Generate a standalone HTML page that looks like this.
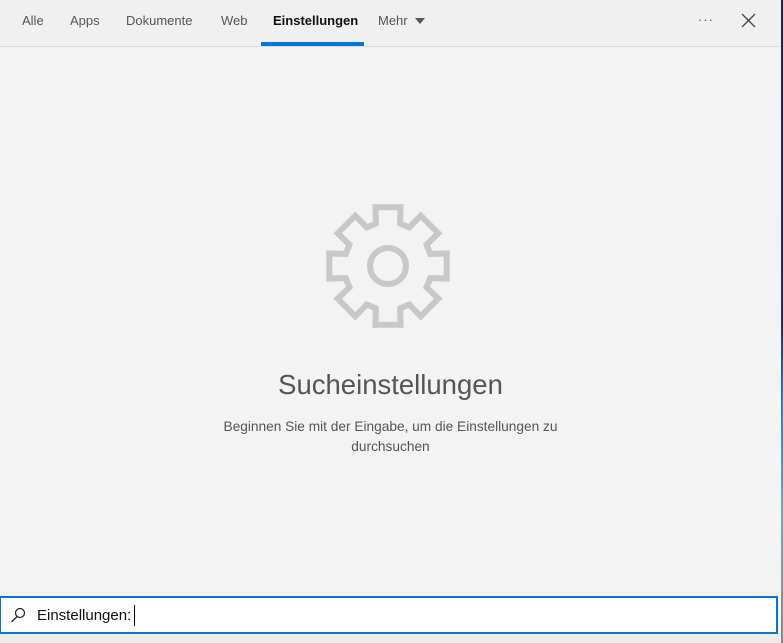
<!DOCTYPE html>
<html><head><meta charset="utf-8"><style>
html,body{margin:0;padding:0;width:783px;height:643px;overflow:hidden;background:#f3f3f3;font-family:"Liberation Sans",sans-serif}
.top{position:absolute;left:0;top:0;width:781px;height:46px;background:#f0f0f0;border-bottom:1px solid #dcdcdc}
.tab{position:absolute;top:13px;font-size:13px;color:#555}
.sel{color:#111;font-weight:bold}
.ul{position:absolute;left:261px;top:42px;width:103px;height:4px;background:#0078d4}
.side{position:absolute;left:781px;top:0;width:2px;height:643px;background:linear-gradient(#1c2740 0,#23304f 50%,#2a78b8 62%,#7aa 80%,#888 100%)}
.title{position:absolute;left:0;width:781px;top:369px;text-align:center;font-size:27.5px;color:#555}
.sub{position:absolute;left:200px;width:381px;top:417px;text-align:center;font-size:13.7px;line-height:20px;color:#555}
.box{position:absolute;left:0;top:596px;width:775px;height:34px;background:#fff;border:2px solid #0078d4;border-left-width:1px}
.box span{position:absolute;left:36px;top:9px;font-size:15px;color:#111}
.caret{position:absolute;left:133px;top:7px;width:1px;height:21px;background:#000}
.bot{position:absolute;left:0;top:634px;width:781px;height:9px;background:#ececec}
</style></head><body>
<div class="top">
<div class="tab" style="left:22px">Alle</div>
<div class="tab" style="left:70px">Apps</div>
<div class="tab" style="left:126px">Dokumente</div>
<div class="tab" style="left:221px">Web</div>
<div class="tab sel" style="left:273px">Einstellungen</div>
<div class="tab" style="left:378px">Mehr</div>
<svg style="position:absolute;left:414px;top:17px" width="12" height="8"><path d="M1 1h10l-5 6z" fill="#555"/></svg>
<div class="tab" style="left:698px;top:12px;letter-spacing:1px">···</div>
<svg style="position:absolute;left:741px;top:13px" width="15" height="15"><path d="M1 1L14 14M14 1L1 14" stroke="#444" stroke-width="1.3"/></svg>
<div class="ul"></div>
</div>
<svg style="position:absolute;left:318px;top:196px" width="140" height="140" viewBox="-70 -70 140 140">
<polygon id="g" fill="none" stroke="#c8c8c8" stroke-width="6" stroke-linejoin="miter"/>
<circle r="18" fill="none" stroke="#c8c8c8" stroke-width="6"/>
</svg>
<script>
var p=[];for(var k=0;k<8;k++){var a=(-90+45*k)*Math.PI/180;var d=Math.PI/180;
[[44,-16],[60,-12],[60,12],[44,16]].forEach(function(q){var t=a+q[1]*d;p.push((q[0]*Math.cos(t)).toFixed(1)+","+(q[0]*Math.sin(t)).toFixed(1));});}
document.getElementById('g').setAttribute('points',p.join(' '));
</script>
<div class="title">Sucheinstellungen</div>
<div class="sub">Beginnen Sie mit der Eingabe, um die Einstellungen zu durchsuchen</div>
<div class="box">
<svg style="position:absolute;left:9px;top:9px" width="16" height="16"><circle cx="10" cy="6" r="4.5" fill="none" stroke="#222" stroke-width="1.2"/><path d="M7 9.5L1.5 15" stroke="#222" stroke-width="1.3"/></svg>
<span>Einstellungen:</span><div class="caret"></div>
</div>
<div class="bot"></div>
<div class="side"></div>
</body></html>
